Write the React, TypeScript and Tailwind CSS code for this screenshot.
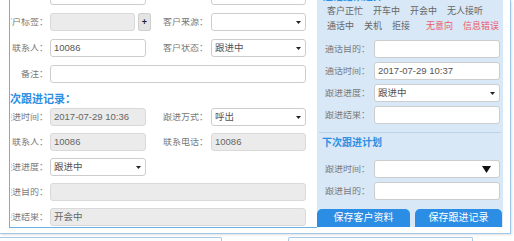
import React from 'react';

type BoxProps = {
  className: string;
  value?: string;
  gray?: boolean;
  caret?: boolean;
  bigCaret?: boolean;
};

function Box({className, value, gray, caret, bigCaret}: BoxProps) {
  return (
    <div
      className={`${className} h-[18px] shrink-0 flex items-center justify-between rounded-[3px] border pl-[3px] pr-[4px] text-[9.5px] leading-none ${
        gray ? 'bg-[#ebebeb] border-[#d9d9d9] text-[#666]' : 'bg-white border-[#cdcdcd] text-[#555]'
      }`}>
      <span className="whitespace-nowrap">{value}</span>
      {caret && (
        <svg width="5" height="3" viewBox="0 0 5 3">
          <path d="M0 0h5L2.5 3z" fill="#222" />
        </svg>
      )}
      {bigCaret && (
        <svg width="9" height="7" viewBox="0 0 9 7" className="mr-[4px]">
          <path d="M0 0h9L4.5 7z" fill="#111" />
        </svg>
      )}
    </div>
  );
}

function Label({className, text}: {className: string; text: string}) {
  return (
    <div className={`${className} shrink-0 flex justify-end overflow-hidden whitespace-nowrap text-[9px] leading-none text-[#7a7a7a]`}>
      {text}
    </div>
  );
}

const tags1 = ['客户正忙', '开车中', '开会中', '无人接听'];

export default function App(): React.JSX.Element {
  return (
    <div className="w-[514px] h-[241px] overflow-hidden bg-white font-['Liberation_Sans','Noto_Sans_CJK_SC',sans-serif]">
      <div className="w-[511px] h-[234px] flex border-r border-b border-[#9fc8e8] shadow-[1px_1px_2px_rgba(0,0,0,0.12)]">
        {/* left: customer + this follow-up */}
        <div className="ml-[9px] w-[308px] h-[228px] shrink-0 border-l border-b border-[#6cb0e6] overflow-hidden pl-[1px]">
          <div className="-mt-[13px] flex flex-col gap-[8px]">
            <div className="flex items-center">
              <Label className="w-[37px] -mt-[6px]" text="客户姓名：" />
              <Box className="ml-[2px] w-[96px]" />
              <Label className="w-[62px] -mt-[6px]" text="手机号码：" />
              <Box className="ml-[3px] w-[95px]" />
            </div>
            <div className="flex items-center">
              <Label className="w-[37px]" text="客户标签：" />
              <Box className="ml-[2px] w-[85px]" gray />
              <div className="ml-[3px] w-[13px] h-[18px] shrink-0 flex items-center justify-center rounded-[2px] border border-[#cfcfcf] bg-[#e4e4e4] text-[9px] font-bold leading-none text-[#222]">
                +
              </div>
              <Label className="w-[57px]" text="客户来源：" />
              <Box className="ml-[3px] w-[95px]" caret />
            </div>
            <div className="flex items-center">
              <Label className="w-[37px]" text="联系人：" />
              <Box className="ml-[2px] w-[96px]" value="10086" />
              <Label className="w-[62px]" text="客户状态：" />
              <Box className="ml-[3px] w-[95px]" value="跟进中" caret />
            </div>
            <div className="flex items-center">
              <Label className="w-[37px]" text="备注：" />
              <Box className="ml-[2px] w-[256px]" />
            </div>
          </div>

          <div className="h-[25px] pt-[8px] flex items-center -ml-[12px] whitespace-nowrap text-[11px] font-bold leading-none text-[#2d8fe2]">
            本次跟进记录：
          </div>

          <div className="flex flex-col gap-[7px]">
            <div className="flex items-center">
              <Label className="w-[37px]" text="跟进时间：" />
              <Box className="ml-[2px] w-[96px]" value="2017-07-29 10:36" gray />
              <Label className="w-[62px]" text="跟进方式：" />
              <Box className="ml-[3px] w-[95px]" value="呼出" caret />
            </div>
            <div className="flex items-center">
              <Label className="w-[37px]" text="联系人：" />
              <Box className="ml-[2px] w-[96px]" value="10086" gray />
              <Label className="w-[62px]" text="联系电话：" />
              <Box className="ml-[3px] w-[95px]" value="10086" gray />
            </div>
            <div className="flex items-center">
              <Label className="w-[37px]" text="跟进进度：" />
              <Box className="ml-[2px] w-[96px]" value="跟进中" caret />
            </div>
            <div className="flex items-center">
              <Label className="w-[37px]" text="跟进目的：" />
              <Box className="ml-[2px] w-[256px]" gray />
            </div>
            <div className="flex items-center">
              <Label className="w-[37px]" text="跟进结果：" />
              <Box className="ml-[2px] w-[256px]" value="开会中" gray />
            </div>
          </div>
        </div>

        {/* right: call result + next plan */}
        <div className="w-[186px] h-[227px] shrink-0 bg-[#d8e8f6] overflow-hidden flex flex-col">
          <div className="-mt-[9px] h-[11px] pl-[6px] whitespace-nowrap text-[10px] font-bold leading-[11px] text-[#2d8fe2]">
            通话结果选择：
          </div>
          <div className="mt-[2px] h-[15px] pl-[10px] flex items-center gap-[10px] text-[9px] leading-none text-[#666]">
            {tags1.map((t) => (
              <span key={t}>{t}</span>
            ))}
          </div>
          <div className="h-[15px] pl-[10px] flex items-center gap-[10px] text-[9px] leading-none text-[#666]">
            <span>通话中</span>
            <span>关机</span>
            <span>拒接</span>
            <span className="ml-[6px] text-[#ec5a6a]">无意向</span>
            <span className="text-[#ec5a6a]">信息错误</span>
          </div>

          <div className="mt-[6px] flex flex-col gap-[4px] pl-[8px]">
            <div className="flex items-center">
              <Label className="w-[45px]" text="通话目的：" />
              <Box className="ml-[4px] w-[126px]" />
            </div>
            <div className="flex items-center">
              <Label className="w-[45px]" text="通话时间：" />
              <Box className="ml-[4px] w-[126px]" value="2017-07-29 10:37" />
            </div>
            <div className="flex items-center">
              <Label className="w-[45px]" text="跟进进度：" />
              <Box className="ml-[4px] w-[126px]" value="跟进中" caret />
            </div>
            <div className="flex items-center">
              <Label className="w-[45px]" text="跟进结果：" />
              <Box className="ml-[4px] w-[126px]" />
            </div>
          </div>

          <div className="mt-[8px] mx-[2px] border-t border-[#b9d3ea]" />
          <div className="h-[20px] pl-[5px] flex items-center text-[10px] font-bold leading-none text-[#2d8fe2]">
            下次跟进计划
          </div>

          <div className="mt-[7px] flex flex-col gap-[4px] pl-[8px]">
            <div className="flex items-center">
              <Label className="w-[45px]" text="跟进时间：" />
              <Box className="ml-[4px] w-[126px]" bigCaret />
            </div>
            <div className="flex items-center">
              <Label className="w-[45px]" text="跟进目的：" />
              <Box className="ml-[4px] w-[126px]" />
            </div>
          </div>

          <div className="mt-[9px] h-[18px] flex gap-[5px]">
            <button className="w-[93px] h-[18px] rounded-t-[5px] bg-[#2b8de3] text-[10px] leading-none text-white">
              保存客户资料
            </button>
            <button className="w-[87px] h-[18px] rounded-t-[5px] bg-[#2b8de3] text-[10px] leading-none text-white">
              保存跟进记录
            </button>
          </div>
        </div>
      </div>

      <div className="flex">
        <div className="mt-[3px] w-[222px] h-[10px] border-t border-r border-[#a8c8e3] rounded-tr-[2px] bg-[#fbfdff]" />
        <div className="mt-[3px] ml-[66px] w-[185px] h-[10px] border-t border-l border-r border-[#a8c8e3] rounded-t-[2px] bg-[#fbfdff]" />
      </div>
    </div>
  );
}
